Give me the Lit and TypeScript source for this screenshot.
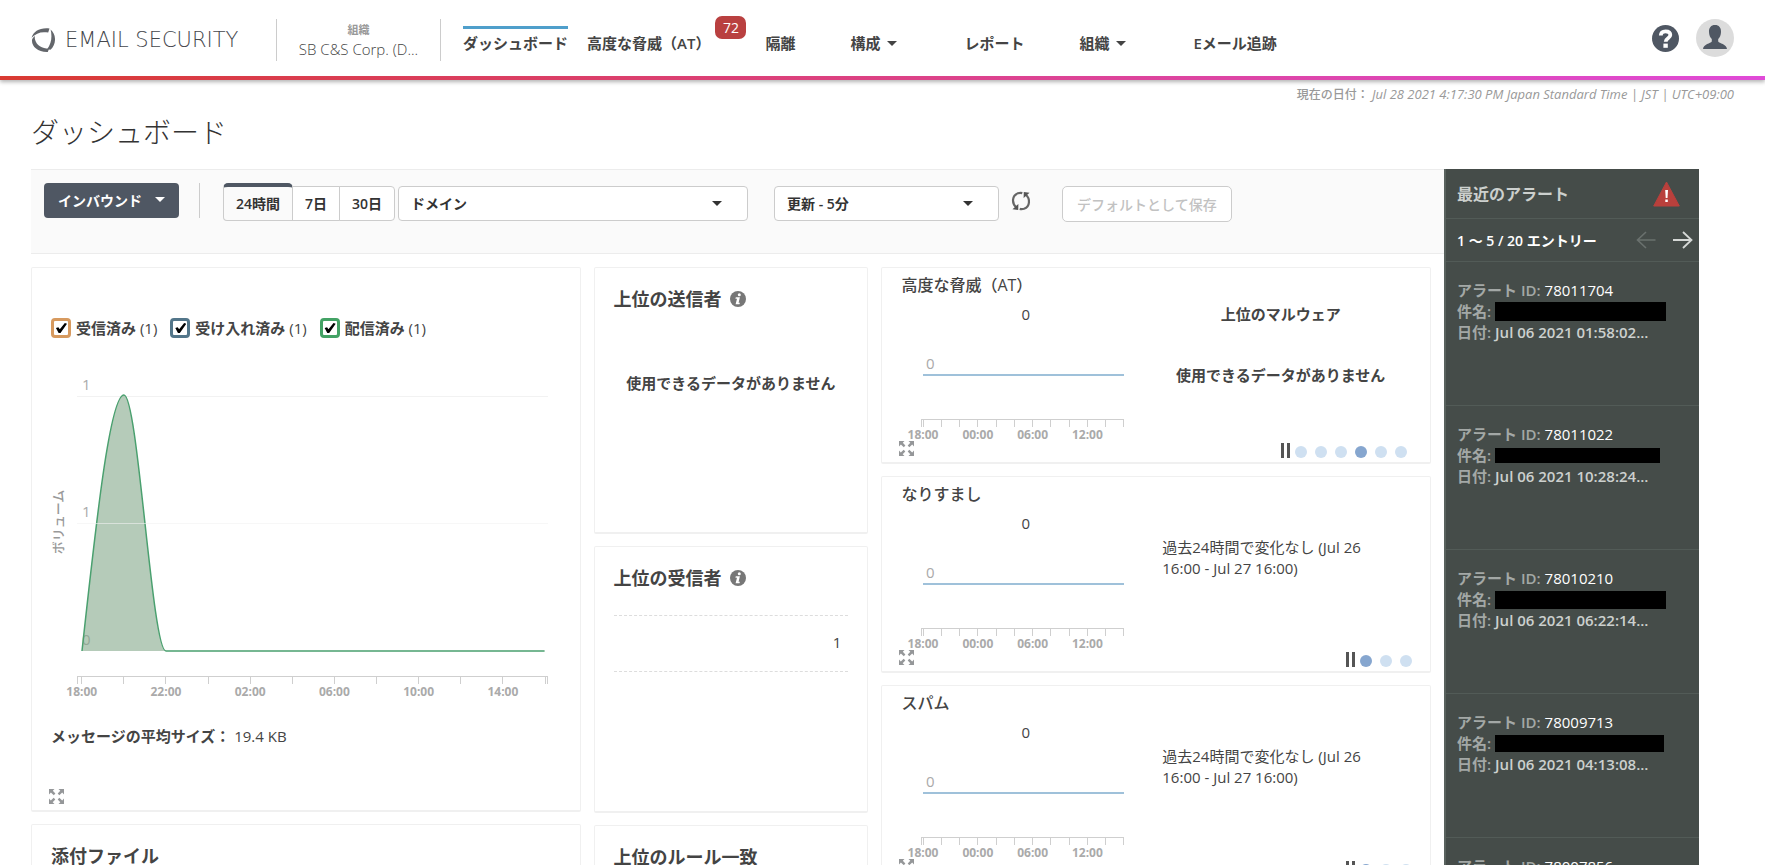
import { LitElement, html, svg, css, nothing } from "lit";
import { customElement, property } from "lit/decorators.js";
import { classMap } from "lit/directives/class-map.js";
import { styleMap } from "lit/directives/style-map.js";

interface Alert {
  id: string;
  date: string;
  maskWidth: number;
  maskHeight: number;
}

const ALERTS: Alert[] = [
  { id: "78011704", date: "Jul 06 2021 01:58:02...", maskWidth: 171, maskHeight: 19 },
  { id: "78011022", date: "Jul 06 2021 10:28:24...", maskWidth: 165, maskHeight: 15 },
  { id: "78010210", date: "Jul 06 2021 06:22:14...", maskWidth: 171, maskHeight: 18 },
  { id: "78009713", date: "Jul 06 2021 04:13:08...", maskWidth: 169, maskHeight: 17 },
  { id: "78007856", date: "Jul 06 2021 02:40:51...", maskWidth: 170, maskHeight: 18 },
];

const expandIcon = html`<svg width="15" height="15" viewBox="0 0 15 15" fill="#959799" aria-hidden="true">
  <path d="M0 0h5.5L3.8 1.7 6.4 4.6 4.8 6.2 1.9 3.5 0 5.5z" />
  <path d="M15 0v5.5L13.2 3.6 10.3 6.2 8.7 4.6 11.3 1.8 9.5 0z" />
  <path d="M0 15V9.5l1.8 1.9 2.9-2.6 1.6 1.6-2.6 2.8L5.5 15z" />
  <path d="M15 15H9.5l1.8-1.8-2.6-2.8 1.6-1.6 2.9 2.6L15 9.5z" />
</svg>`;

const infoIcon = html`<svg width="16" height="16" viewBox="0 0 16 16" role="img" aria-label="情報">
  <circle cx="8" cy="8" r="8" fill="#777" />
  <circle cx="9.3" cy="3.8" r="1.5" fill="#fff" />
  <path d="M5.800 6.200h4.100L8.600 11.700h1.300l-.4 1.500H5.600l1.400-5.400H5.400z" fill="#fff" />
</svg>`;

/** Axis, grid and an optional area curve over a day of two-hour ticks. */
@customElement("time-chart")
export class TimeChart extends LitElement {
  @property({ type: Boolean }) large = false;

  static styles = css`
    :host { display: block; }
    .plot { display: block; width: 100%; overflow: visible; }
    .large { height: 320px; }
    .small { height: 117px; }
    .axis, .tick { stroke: #cfcfcf; shape-rendering: crispEdges; fill: none; }
    .grid { stroke: #f2f2f2; shape-rendering: crispEdges; }
    .time { font: bold 12px "Open Sans", sans-serif; fill: #aaa; text-anchor: middle; }
    .value { font: 15px "Open Sans", sans-serif; fill: #aaa; }
    .title { font: 500 13px "Open Sans", "Noto Sans CJK JP", sans-serif; fill: #999; text-anchor: middle; }
    .area { fill: #84a98a; fill-opacity: 0.6; }
    .curve { fill: none; stroke: #4aa06f; stroke-width: 1.5; vector-effect: non-scaling-stroke; }
    .flat { stroke: #9fc1da; stroke-width: 2; shape-rendering: crispEdges; }
  `;

  render() {
    const hours = ["18:00", "20:00", "22:00", "00:00", "02:00", "04:00", "06:00", "08:00", "10:00", "12:00", "14:00", "16:00"];
    const every = this.large ? 2 : 3;
    const axisY = this.large ? 297 : 95;
    const step = this.large ? 8.95 : 9;
    const at = (i: number) => `${1 + i * step}%`;
    return html`<svg class="plot ${this.large ? "large" : "small"}" aria-hidden="true">
      ${this.large ? this.volume() : this.zero()}
      <line class="axis" x1="0" x2="100%" y1=${axisY} y2=${axisY} />
      <line class="tick" x1="0" x2="0" y1=${axisY} y2=${axisY + 8} />
      <line class="tick" x1="100%" x2="100%" y1=${axisY} y2=${axisY + 8} />
      ${hours.map(
        (label, i) => svg`
          <line class="tick" x1=${at(i)} x2=${at(i)} y1=${axisY} y2=${axisY + 8} />
          ${i % every === 0 && i < 11 ? svg`<text class="time" x=${at(i)} y=${axisY + 20}>${label}</text>` : nothing}`
      )}
    </svg>`;
  }

  private volume() {
    return svg`
      <text class="title" transform="translate(-14 143) rotate(-90)">ボリューム</text>
      <text class="value" x="5" y="11">1</text>
      <text class="value" x="5" y="138">1</text>
      <text class="value" x="5" y="266">0</text>
      <line class="grid" x1="0" x2="100%" y1="17" y2="17" />
      <svg width="100%" height="320" viewBox="0 0 471 320" preserveAspectRatio="none">
        <path class="area" d="M5 272C19 144 33 16 47 16C61 16 75 272 89 272Z" />
        <path class="curve" d="M5 272C19 144 33 16 47 16C61 16 75 272 89 272H468" />
      </svg>
      <line class="grid" x1="0" x2="100%" y1="144" y2="144" stroke-opacity="0.6" />`;
  }

  private zero() {
    return svg`
      <text class="value" x="5" y="45">0</text>
      <line class="flat" x1="1%" x2="100%" y1="51" y2="51" />`;
  }
}

@customElement("threat-card")
export class ThreatCard extends LitElement {
  @property() heading = "";
  @property({ type: Number }) pages = 3;
  @property({ type: Number }) current = 0;
  @property({ type: Boolean, reflect: true }) malware = false;

  static styles = css`
    :host {
      display: block;
      box-sizing: border-box;
      background: #fff;
      border: 1px solid #f0f0f0;
      border-bottom-width: 2px;
      border-radius: 2px;
      padding: 6px 0 4px;
    }
    h2 { margin: 0; padding-left: 19px; font-size: 16px; line-height: 22px; font-weight: 500; }
    .body { display: grid; grid-template-columns: 5fr 6fr; font-size: 15px; }
    .trend { padding: 8px 7px 0 39px; }
    .count { padding-left: 6px; text-align: center; line-height: 20px; }
    .side { padding: 8px 31px 0; text-align: center; line-height: 20px; font-weight: 600; }
    .side p { margin: 0; }
    .none { padding-top: 41px; }
    .change { padding: 32px 31px 0; line-height: 21px; }
    .foot { display: flex; justify-content: space-between; height: 17px; padding: 0 18px 0 17px; }
    :host([malware]) .foot { padding-right: 23px; }
    .pager { display: flex; align-items: flex-end; gap: 8px; }
    button { border: 0; padding: 0; margin: 0; background: none; display: block; }
    .expand { height: 15px; }
    .pause { width: 9px; height: 15px; box-sizing: border-box; border: solid #555; border-width: 0 3px; margin-right: -3px; }
    .dot { width: 12px; height: 12px; border-radius: 50%; background: #cfe0f1; }
    .active { background: #86a6cf; }
  `;

  render() {
    return html`
      <h2>${this.heading}</h2>
      <div class="body">
        <div class="trend">
          <div class="count">0</div>
          <time-chart></time-chart>
        </div>
        ${this.malware
          ? html`<div class="side"><p>上位のマルウェア</p><p class="none">使用できるデータがありません</p></div>`
          : html`<div class="change">過去24時間で変化なし (Jul 26 16:00 - Jul 27 16:00)</div>`}
      </div>
      <div class="foot">
        <button class="expand" aria-label="拡大">${expandIcon}</button>
        <div class="pager">
          <button class="pause" aria-label="一時停止"></button>
          ${Array.from({ length: this.pages }, (_, i) => html`<button
            class=${classMap({ dot: true, active: i === this.current })}
            aria-label="ページ ${i + 1}"
          ></button>`)}
        </div>
      </div>
    `;
  }
}

@customElement("alert-panel")
export class AlertPanel extends LitElement {
  static styles = css`
    :host {
      display: block;
      box-sizing: border-box;
      background: #454c49;
      border-left: 2px solid #59625e;
      color: #ccd0ce;
      font-size: 15px;
    }
    .head, .range, .item { border-bottom: 1px solid #525b57; padding-left: 11px; }
    .head { display: flex; align-items: center; justify-content: space-between; height: 49px; padding-right: 19px; }
    h2 { margin: 0; font-size: 16px; line-height: 24px; font-weight: 600; }
    .range { display: flex; align-items: center; height: 42px; padding-right: 6px; gap: 17px; color: #fff; font-size: 14px; font-weight: 600; }
    .range span { flex: 1; }
    button { border: 0; padding: 0; background: none; display: block; height: 18px; }
    ul { list-style: none; margin: 0; padding: 0; }
    .item { height: 143px; box-sizing: content-box; }
    .lines { padding-top: 18px; line-height: 21px; font-weight: 600; white-space: nowrap; }
    .line { display: flex; align-items: center; gap: 4px; height: 21px; }
    .key { color: #a3a8a6; }
    .id { color: #fff; font-weight: 500; }
    .mask { background: #000; }
  `;

  render() {
    return html`
      <div class="head">
        <h2>最近のアラート</h2>
        <svg width="27" height="26" viewBox="0 0 27 26" aria-hidden="true">
          <path d="M13.5 1 26.3 25H.7z" fill="#b9403c" stroke="#b9403c" stroke-linejoin="round" />
          <path d="M12.2 9h2.8l-.5 8h-1.8zM12.3 18.5h2.5v2.4h-2.5z" fill="#fff" />
        </svg>
      </div>
      <div class="range">
        <span>1 ～ 5 / 20 エントリー</span>
        <button aria-label="前へ" disabled>
          <svg width="20" height="18" viewBox="0 0 20 18" fill="none" stroke="#6a716e" stroke-width="1.6"><path d="M19.500 9H1.500M10 1 1.500 9l8.500 8" /></svg>
        </button>
        <button aria-label="次へ">
          <svg width="20" height="18" viewBox="0 0 20 18" fill="none" stroke="#d5d8d6" stroke-width="1.8"><path d="M0 9h18.500M10 1l8.500 8-8.500 8" /></svg>
        </button>
      </div>
      <ul>
        ${ALERTS.map(
          (a) => html`<li class="item">
            <div class="lines">
              <div class="line"><span class="key">アラート ID:</span><span class="id">${a.id}</span></div>
              <div class="line">
                <span class="key">件名:</span>
                <span class="mask" style=${styleMap({ width: `${a.maskWidth}px`, height: `${a.maskHeight}px` })}></span>
              </div>
              <div class="line"><span class="key">日付:</span><span>${a.date}</span></div>
            </div>
          </li>`
        )}
      </ul>
    `;
  }
}

@customElement("app-root")
export class AppRoot extends LitElement {
  static styles = css`
    :host {
      display: flex;
      flex-direction: column;
      height: 100vh;
      overflow: hidden;
      background: #fff;
      color: #444;
      font-family: "Open Sans", "Noto Sans CJK JP", sans-serif;
      font-size: 15px;
    }
    * { box-sizing: border-box; }
    button, select, input { font-family: inherit; margin: 0; }
    button { cursor: pointer; }

    header {
      flex: none;
      display: flex;
      height: 80px;
      padding: 0 31px;
      border-bottom: 4px solid;
      border-image: linear-gradient(90deg, #d93a32, #db3f6c 35%, #dd45a5 70%, #e04bd8) 1;
      box-shadow: 0 2px 4px rgba(0, 0, 0, 0.3);
      white-space: nowrap;
    }
    .logo { display: flex; align-items: center; gap: 10px; min-width: 224px; padding-top: 4px; color: #45474c; text-decoration: none; font: 200 21px "DejaVu Sans", sans-serif; }
    .org {
      min-width: 165px;
      margin: 19px 0 15px 21px;
      padding: 0 20px;
      border: solid #ccc;
      border-width: 0 1px;
      text-align: center;
      line-height: 18px;
      font-weight: 300;
    }
    .org-label { display: block; font-size: 11px; line-height: 21px; color: #999; font-weight: 600; }
    nav { display: flex; align-items: flex-start; gap: 55px; padding: 16px 0 0 22px; font-weight: 600; }
    .near { display: flex; align-items: flex-start; gap: 19px; }
    .near > span { display: flex; gap: 5px; align-items: flex-start; }
    nav a { display: block; color: inherit; text-decoration: none; margin-top: 10px; border-top: 3px solid transparent; padding-top: 4px; line-height: 20px; }
    nav a.active { border-color: #4f9fcb; }
    nav a.menu { display: flex; align-items: center; gap: 7px; padding-right: 12px; }
    .caret { width: 0; height: 0; border: 5px solid transparent; border-top-color: currentColor; border-bottom: 0; }
    .badge { background: #b94040; color: #fff; border-radius: 7px; width: 31px; height: 23px; line-height: 23px; text-align: center; font-size: 14px; font-weight: 400; }
    .user { margin-left: auto; display: flex; align-items: center; gap: 17px; }
    .user button { border: 0; padding: 0; background: none; display: block; }
    .user svg { display: block; }

    main { flex: 1; min-height: 0; display: flex; flex-direction: column; padding: 4px 31px 0; }
    .now { height: 20px; text-align: right; font-size: 13px; line-height: 20px; color: #999; font-style: italic; }
    .now span { font-size: 12px; font-style: normal; font-weight: 500; }
    h1 { margin: 8px 0 17px; font-size: 28px; line-height: 40px; font-weight: 300; color: #333; }
    .layout { flex: 1; min-height: 0; display: flex; padding-right: 35px; }
    .content { flex: 1; min-width: 0; }
    alert-panel { width: 255px; flex: none; }

    .toolbar {
      display: flex;
      align-items: flex-start;
      height: 85px;
      padding: 13px 13px 0;
      background: #fafafa;
      border: solid #ececec;
      border-width: 1px 0;
      color: #333;
    }
    .inbound {
      display: flex; align-items: center; justify-content: space-between;
      width: 135px; height: 35px; padding: 0 14px 2px;
      border: 0; border-radius: 4px; background: #4f5763; color: #fff;
      font-size: 14px; font-weight: 600;
    }
    .bar { width: 1px; height: 35px; background: #ccc; margin: 0 23px 0 20px; }
    .group { display: flex; margin-right: 3px; }
    .group button {
      height: 35px; margin: 3px 0 0 -1px; padding: 0 12px;
      border: 1px solid #ccc; background: #fff; color: #333;
      font-size: 14px; font-weight: 600; line-height: 33px;
    }
    .group button:first-child { height: 38px; margin: 0; border-top: 4px solid #4f5763; border-radius: 5px 5px 0 4px; background: #fafafa; }
    .group button:last-child { border-radius: 0 4px 4px 0; }
    .pick { position: relative; margin-top: 3px; }
    .pick select {
      width: 100%; height: 35px; padding: 0 12px;
      appearance: none; border: 1px solid #ccc; border-radius: 4px; background: #fff; color: #333;
      font-size: 14px; font-weight: 600;
    }
    .pick .caret { position: absolute; right: 26px; top: 15px; pointer-events: none; }
    .domain { flex: 0 1 350px; margin-right: 26px; }
    .refresh { flex: 0 1 225px; margin-right: 12px; }
    .reload { border: 0; padding: 0; background: none; margin: 8px 31px 0 0; }
    .reload svg { display: block; }
    .save { height: 36px; margin-top: 3px; padding: 0 14px; border: 1px solid #ccc; border-radius: 5px; background: #fff; color: #c2c2c2; font-size: 14px; font-weight: 500; white-space: nowrap; }

    .board { display: grid; grid-template-columns: 2fr 1fr 2fr; gap: 13px; padding: 13px 13px 0 0; }
    .col { display: flex; flex-direction: column; gap: 12px; min-width: 0; }
    .card { background: #fff; border: 1px solid #f0f0f0; border-bottom-width: 2px; border-radius: 2px; padding: 19px; display: flex; flex-direction: column; }
    .card h2 { display: flex; align-items: center; gap: 8px; margin: 0; font-size: 18px; line-height: 24px; font-weight: 600; }
    .volume { min-height: 545px; padding: 50px 32px 6px 19px; }
    .volume time-chart { margin: 41px 0 27px 26px; }
    .legend { display: flex; gap: 13px; line-height: 20px; }
    .legend label { display: flex; align-items: center; gap: 5px; font-weight: 600; }
    .legend small { font-size: 15px; font-weight: 400; }
    .legend input { appearance: none; display: grid; place-items: center; width: 20px; height: 20px; border: 3px solid; border-radius: 4px; background: #fff; }
    .legend input:checked::before { content: ""; width: 12px; height: 10px; background: #000; clip-path: polygon(8% 50%, 28% 42%, 40% 62%, 82% 0, 100% 8%, 46% 100%, 30% 100%); }
    .legend .received { border-color: #d79a5f; }
    .legend .accepted { border-color: #53768a; }
    .legend .delivered { border-color: #43a265; }
    .average { margin: 0; line-height: 20px; font-weight: 600; }
    .average span { font-weight: 400; }
    .expand { align-self: flex-start; margin: auto 0 0 -2px; border: 0; padding: 0; background: none; }
    .expand svg { display: block; }
    .top { height: 267px; }
    .empty { margin: 62px 0 0; line-height: 20px; text-align: center; font-weight: 600; }
    table { width: 100%; margin-top: 25px; border-collapse: collapse; }
    td { height: 56px; padding: 0 7px 4px; text-align: right; border: dashed #ddd; border-width: 1px 0; }
  `;

  render() {
    return html`
      <header>
        <a class="logo" href="#">
          <svg width="24" height="24" viewBox="0 0 24 24" fill="#63666b" aria-hidden="true">
            <path d="M.5 9.800C2.500 3.200 9-.6 18.500.5L17.200 4.600C10.500 3.200 5 5 .5 9.800z" />
            <path d="M1 12C.5 18.500 7 24.300 16.800 23.900L18 20.800C11 20.500 5.500 17.500 4 11.500c-.3-1.200-.3-2.200 0-3.500C2.200 9.500 1.200 10.500 1 12z" />
            <path d="M19.600 1.500C25.500 6.500 25.500 16 19.500 21.800l-3.400-.6C20.500 15.500 21.300 8.500 19.600 1.500z" />
          </svg>
          <span>EMAIL SECURITY</span>
        </a>
        <div class="org"><span class="org-label">組織</span>SB C&amp;S Corp. (D...</div>
        <nav>
          <div class="near">
            <a class="active" href="#">ダッシュボード</a>
            <span><a href="#">高度な脅威（AT）</a><span class="badge">72</span></span>
            <a href="#">隔離</a>
          </div>
          <a class="menu" href="#">構成<i class="caret"></i></a>
          <a href="#">レポート</a>
          <a class="menu" href="#">組織<i class="caret"></i></a>
          <a href="#">Eメール追跡</a>
        </nav>
        <div class="user">
          <button aria-label="ヘルプ">
            <svg width="27" height="27" viewBox="0 0 27 27">
              <circle cx="13.500" cy="13.500" r="13.500" fill="#4f5763" />
              <path d="M8.800 10.500C8.900 7.600 10.800 6.300 13.600 6.300c2.900 0 4.700 1.500 4.700 3.800 0 3.300-4.600 3-4.600 6.600" fill="none" stroke="#fff" stroke-width="3.800" />
              <rect x="11.400" y="18.600" width="4.400" height="4.200" fill="#fff" />
            </svg>
          </button>
          <button aria-label="アカウント">
            <svg width="38" height="38" viewBox="0 0 38 38">
              <circle cx="19" cy="19" r="19" fill="#dcdcdc" />
              <path d="M19 6c4 0 6.200 2.700 6 7-.1 3.200-1.200 5.500-2.800 7v2.600c1.200 2 8.300 2.400 8.800 7.400H7c.5-5 7.600-5.400 8.800-7.400V20c-1.600-1.500-2.700-3.800-2.800-7-.2-4.300 2-7 6-7z" fill="#4f5763" />
            </svg>
          </button>
        </div>
      </header>
      <main>
        <div class="now"><span>現在の日付：</span> Jul 28 2021 4:17:30 PM Japan Standard Time | JST | UTC+09:00</div>
        <h1>ダッシュボード</h1>
        <div class="layout">
          <div class="content">
            <div class="toolbar">
              <button class="inbound">インバウンド<i class="caret"></i></button>
              <div class="bar"></div>
              <div class="group">
                <button aria-pressed="true">24時間</button>
                <button aria-pressed="false">7日</button>
                <button aria-pressed="false">30日</button>
              </div>
              <div class="pick domain">
                <select aria-label="ドメイン"><option>ドメイン</option></select>
                <i class="caret"></i>
              </div>
              <div class="pick refresh">
                <select aria-label="更新"><option>更新 - 5分</option></select>
                <i class="caret"></i>
              </div>
              <button class="reload" aria-label="再読み込み">
                <svg width="20" height="20" viewBox="0 0 20 20" fill="none" stroke="#666" stroke-width="2.200">
                  <path d="M5.500 16.500C.5 12.500.8 4.500 7 2.200c1.600-.5 3-.5 4.300-.1" />
                  <path d="M14.500 3.500c5 4 4.700 12-1.500 14.300-1.600.5-3 .5-4.300.1" />
                  <path d="M1.500 18.300l5.700.6.2-6z" fill="#555" stroke="none" />
                  <path d="M18.500 1.700l-5.700-.6-.2 6z" fill="#555" stroke="none" />
                </svg>
              </button>
              <button class="save" disabled>デフォルトとして保存</button>
            </div>
            <div class="board">
              <div class="col">
                <section class="card volume">
                  <div class="legend">
                    <label><input class="received" type="checkbox" checked /><span>受信済み <small>(1)</small></span></label>
                    <label><input class="accepted" type="checkbox" checked /><span>受け入れ済み <small>(1)</small></span></label>
                    <label><input class="delivered" type="checkbox" checked /><span>配信済み <small>(1)</small></span></label>
                  </div>
                  <time-chart large></time-chart>
                  <p class="average">メッセージの平均サイズ： <span>19.4 KB</span></p>
                  <button class="expand" aria-label="拡大">${expandIcon}</button>
                </section>
                <section class="card top"><h2>添付ファイル</h2></section>
              </div>
              <div class="col">
                <section class="card top">
                  <h2>上位の送信者 ${infoIcon}</h2>
                  <p class="empty">使用できるデータがありません</p>
                </section>
                <section class="card top">
                  <h2>上位の受信者 ${infoIcon}</h2>
                  <table><tbody><tr><td>1</td></tr></tbody></table>
                </section>
                <section class="card top"><h2>上位のルール一致</h2></section>
              </div>
              <div class="col">
                <threat-card heading="高度な脅威（AT）" pages="6" current="3" malware></threat-card>
                <threat-card heading="なりすまし"></threat-card>
                <threat-card heading="スパム"></threat-card>
              </div>
            </div>
          </div>
          <alert-panel></alert-panel>
        </div>
      </main>
    `;
  }
}
